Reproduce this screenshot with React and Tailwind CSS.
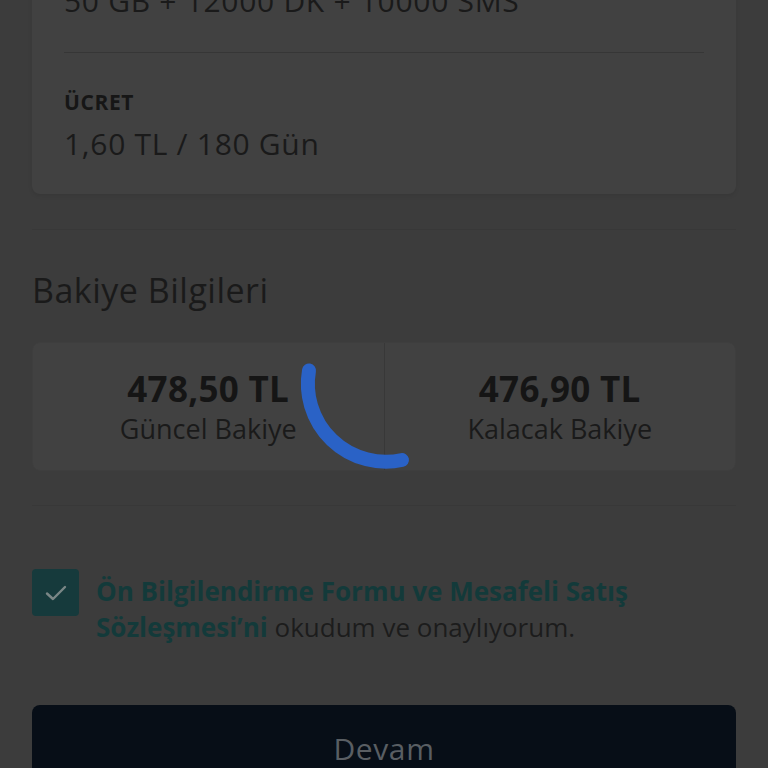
import React from "react";

const Spinner = () => (
  <svg
    className="absolute inset-0 pointer-events-none"
    width="768"
    height="768"
    viewBox="0 0 768 768"
  >
    <path
      d="M 402 460 A 78 78 0 0 1 309 370.5"
      fill="none"
      stroke="#2a62c6"
      strokeWidth="14"
      strokeLinecap="round"
    />
  </svg>
);

const BalanceItem = ({ amount, label }) => (
  <div className="flex-1 flex flex-col items-center justify-center">
    <span className="text-[35px] leading-[42px] font-bold tracking-[0.3px] text-[#151515]">{amount}</span>
    <span className="text-[27px] leading-[34px] mt-[2px] text-[#1a1a1a]">{label}</span>
  </div>
);

const App = () => {
  return (
    <div
      className="relative w-[768px] h-[768px] overflow-hidden bg-[#3c3c3c]"
      style={{ fontFamily: "'Open Sans', 'Noto Sans', sans-serif" }}
    >
      <div className="px-8">
        {/* paket karti */}
        <div className="bg-[#414141] rounded-b-lg px-8 pb-[32px] shadow-[0_2px_4px_rgba(0,0,0,0.08)]">
          <p className="mt-[-17px] text-[30px] leading-[36px] tracking-[0.7px] text-[#1a1a1a]">
            50 GB + 12000 DK + 10000 SMS
          </p>
          <div className="h-px bg-[#363636] mt-[33px]" />
          <p className="mt-[36px] text-[21px] leading-[26px] font-bold tracking-[0.6px] text-[#161616]">ÜCRET</p>
          <p className="mt-[11px] text-[30px] leading-[36px] tracking-[0.7px] text-[#1a1a1a]">1,60 TL / 180 Gün</p>
        </div>

        <div className="h-px bg-[#383838] mt-[35px]" />

        <h2 className="mt-[40px] text-[34px] leading-[40px] tracking-[0.5px] text-[#1a1a1a]">Bakiye Bilgileri</h2>

        <div className="mt-[32px] h-[129px] flex bg-[#414141] border border-[#3e3e3e] rounded-lg">
          <BalanceItem amount="478,50 TL" label="Güncel Bakiye" />
          <div className="w-px bg-[#383838]" />
          <BalanceItem amount="476,90 TL" label="Kalacak Bakiye" />
        </div>

        <div className="h-px bg-[#383838] mt-[34px]" />

        <div className="mt-[63px] flex items-start gap-[17px]">
          <div className="shrink-0 w-[47px] h-[47px] rounded-[4px] bg-[#163a3c] flex items-center justify-center">
            <svg width="22" height="16" viewBox="0 0 22 16" fill="none">
              <path
                d="M2 8.5L8 14L20 2"
                stroke="#7a8686"
                strokeWidth="2.4"
                strokeLinecap="round"
                strokeLinejoin="round"
              />
            </svg>
          </div>
          <p className="max-w-[570px] pt-[4px] text-[26px] leading-[36px] text-[#1c1c1c]">
            <span className="font-bold text-[#133a3a]">
              Ön Bilgilendirme Formu ve Mesafeli Satış Sözleşmesi’ni
            </span>{" "}
            okudum ve onaylıyorum.
          </p>
        </div>

        <button className="mt-[60px] w-full h-[90px] rounded-lg bg-[#070e17] flex justify-center pt-[26px]">
          <span className="text-[30px] leading-[36px] tracking-[0.6px] text-[#595e63]">Devam</span>
        </button>
      </div>

      <Spinner />
    </div>
  );
};

export default App;
